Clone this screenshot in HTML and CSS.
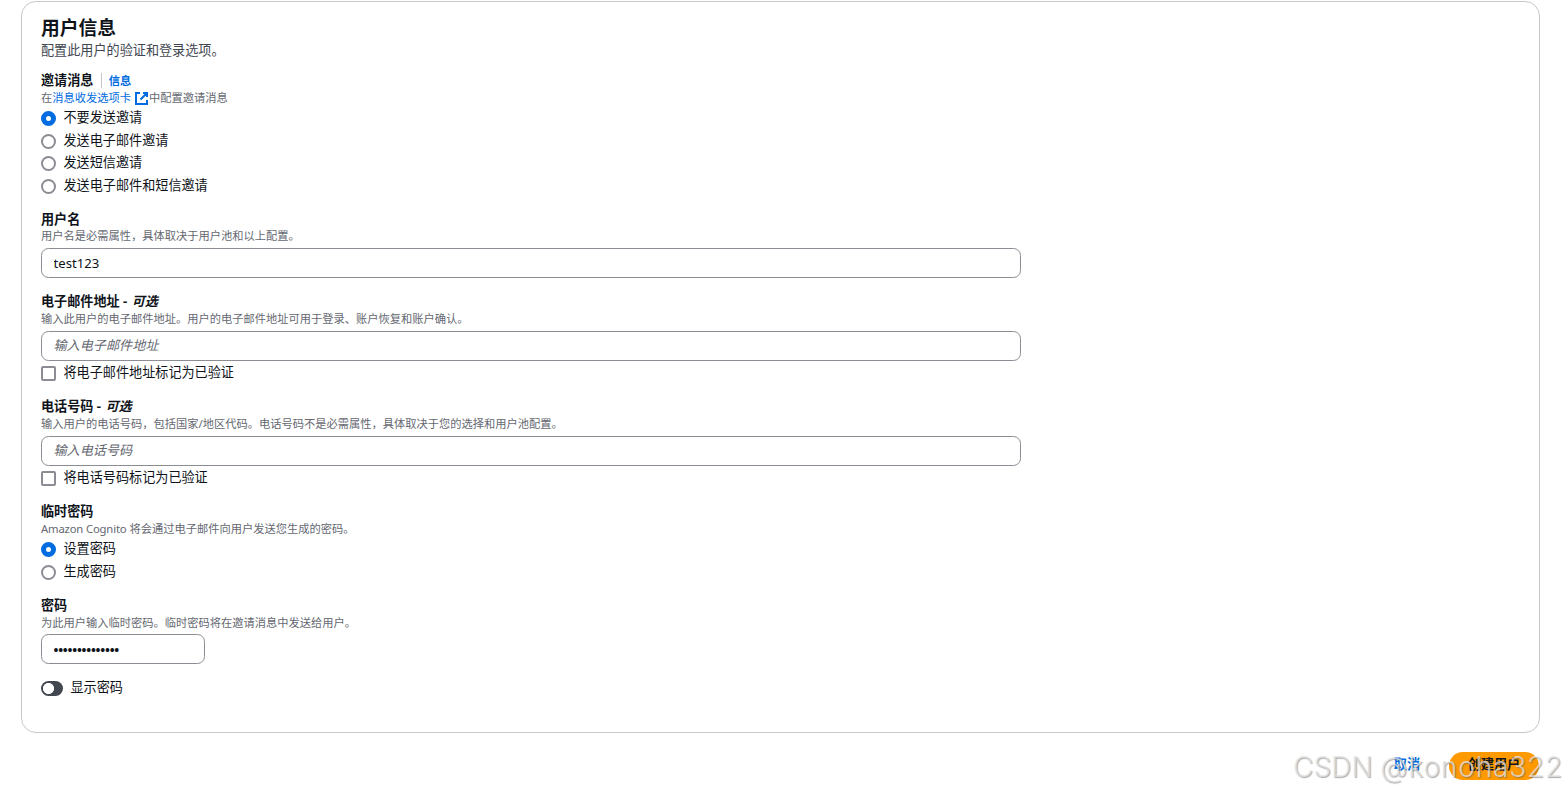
FILE: index.html
```html
<!DOCTYPE html>
<html lang="zh-CN">
<head>
  <meta charset="UTF-8" />
  <meta name="viewport" content="width=device-width, initial-scale=1.0" />
  <title>创建用户</title>
  <link rel="stylesheet" href="styles.css">
</head>
<body>
  <form class="page">
    <section class="card">
      <header>
        <h2>用户信息</h2>
        <p class="description">配置此用户的验证和登录选项。</p>
      </header>

      <div class="field">
        <div class="label">邀请消息 <a class="info" href="#">信息</a></div>
        <div class="hint">在<a href="#">消息收发选项卡
          <svg class="external" viewBox="0 0 15 15"><path d="M6 2H2v11h11V9M9 2h4v4M12.5 2.5 6.5 8.5" /></svg></a>中配置邀请消息</div>
        <div class="options">
          <label class="option"><input type="radio" name="invite" checked><span>不要发送邀请</span></label>
          <label class="option"><input type="radio" name="invite"><span>发送电子邮件邀请</span></label>
          <label class="option"><input type="radio" name="invite"><span>发送短信邀请</span></label>
          <label class="option"><input type="radio" name="invite"><span>发送电子邮件和短信邀请</span></label>
        </div>
      </div>

      <div class="field">
        <label class="label" for="username">用户名</label>
        <div class="hint">用户名是必需属性，具体取决于用户池和以上配置。</div>
        <input class="text" id="username" type="text" value="test123">
      </div>

      <div class="field">
        <label class="label" for="email">电子邮件地址 - <i>可选</i></label>
        <div class="hint">输入此用户的电子邮件地址。用户的电子邮件地址可用于登录、账户恢复和账户确认。</div>
        <input class="text" id="email" type="text" placeholder="输入电子邮件地址">
        <label class="option"><input type="checkbox"><span>将电子邮件地址标记为已验证</span></label>
      </div>

      <div class="field">
        <label class="label" for="phone">电话号码 - <i>可选</i></label>
        <div class="hint">输入用户的电话号码，包括国家/地区代码。电话号码不是必需属性，具体取决于您的选择和用户池配置。</div>
        <input class="text" id="phone" type="text" placeholder="输入电话号码">
        <label class="option"><input type="checkbox"><span>将电话号码标记为已验证</span></label>
      </div>

      <div class="field">
        <div class="label">临时密码</div>
        <div class="hint"><span class="latin">Amazon Cognito</span> 将会通过电子邮件向用户发送您生成的密码。</div>
        <div class="options">
          <label class="option"><input type="radio" name="temp" checked><span>设置密码</span></label>
          <label class="option"><input type="radio" name="temp"><span>生成密码</span></label>
        </div>
      </div>

      <div class="field">
        <label class="label" for="password">密码</label>
        <div class="hint">为此用户输入临时密码。临时密码将在邀请消息中发送给用户。</div>
        <input class="text password" id="password" type="password" value="Passw0rd!12345">
      </div>

      <label class="option toggle"><input type="checkbox"><span>显示密码</span></label>
    </section>

    <footer class="actions">
      <button type="button" class="btn-link">取消</button>
      <button type="button" class="btn-primary">创建用户</button>
    </footer>
  </form>
  <div class="watermark">CSDN <span>@konoha322</span></div>
</body>
</html>
```
FILE: styles.css
```css
:root {
  --text: #0f141a;
  --muted: #656871;
  --border: #8c8c94;
  --card-border: #c6c6cd;
  --blue: #006ce0;
  --orange: #ff9900;
}

* { box-sizing: border-box; }

body {
  margin: 0;
  height: 794px;
  overflow: hidden;
  background: #fff;
  color: var(--text);
  font-family: "Noto Sans", "Noto Sans CJK SC", sans-serif;
  font-size: 13.125px;
  line-height: 18.75px;
}

a { color: var(--blue); text-decoration: none; }

.page { padding: 1px 27px 0 21px; }

.card {
  display: flex;
  flex-direction: column;
  gap: 15px;
  height: 732px;
  padding: 15px 19px;
  border: 1px solid var(--card-border);
  border-radius: 15px;
}

header { height: 39.85px; }
h2 { margin: 0; font-size: 18.75px; line-height: 22.5px; }
.description { margin: 1px 0 0; color: #424650; }

.field { display: flex; flex-direction: column; }
.label { font-weight: 700; height: 18.75px; line-height: 17.5px; }
.label i { margin-left: 1px; }
.hint {
  height: 15px;
  margin-bottom: 3.75px;
  font-size: 11.25px;
  line-height: 14px;
  color: var(--muted);
  white-space: nowrap;
}
.latin { letter-spacing: -0.15px; }

.info {
  display: inline-block;
  margin-left: 4px;
  padding-left: 7px;
  border-left: 1px solid var(--card-border);
  font-size: 11.25px;
  line-height: 15px;
}

.external {
  width: 15px;
  height: 15px;
  vertical-align: -4px;
  fill: none;
  stroke: currentColor;
  stroke-width: 2;
}

.options { display: flex; flex-direction: column; gap: 3.75px; }
.option { display: flex; align-items: center; gap: 7.5px; height: 18.75px; }
.option span { line-height: 18px; margin-top: -3px; }

.option input {
  appearance: none;
  flex: none;
  width: 15px;
  height: 15px;
  margin: 0;
  border: 2px solid var(--border);
  border-radius: 2px;
  background: #fff;
}
.option input[type="radio"] { border-radius: 50%; }
.option input[type="radio"]:checked { border: 5px solid var(--blue); }

.text {
  width: 980px;
  height: 30px;
  padding: 0 11.5px;
  border: 1px solid var(--border);
  border-radius: 7.5px;
  color: var(--text);
  font: inherit;
}
.text::placeholder { color: var(--muted); font-style: italic; }
.text:placeholder-shown { padding-bottom: 2px; }
.text + .option { margin-top: 3.75px; }
.password {
  width: 164px;
  padding-top: 2px;
  font-weight: 700;
  letter-spacing: -0.25px;
}

.toggle input {
  width: 22px;
  border: 0;
  border-radius: 8px;
  background: radial-gradient(circle at 7.5px 50%, #fff 5.2px, #424650 5.9px);
}

.actions {
  display: flex;
  justify-content: flex-end;
  gap: 29px;
  padding: 19px 1px 0 0;
}
.actions button {
  height: 28px;
  padding: 0 0 3px;
  border: 0;
  font: inherit;
  font-weight: 700;
}
.btn-link { background: none; color: var(--blue); }
.actions .btn-primary {
  width: 90px;
  border-radius: 14px;
  background: var(--orange);
  color: var(--text);
}

.watermark {
  position: absolute;
  left: 1293px;
  bottom: 9px;
  font-family: Inter, sans-serif;
  font-weight: 300;
  font-size: 28px;
  line-height: 36px;
  white-space: nowrap;
  color: rgba(228, 228, 228, 0.75);
  text-shadow: 1px 1px 1px rgba(90, 90, 90, 0.5);
  pointer-events: none;
}
.watermark span { letter-spacing: 0.85px; }
```
